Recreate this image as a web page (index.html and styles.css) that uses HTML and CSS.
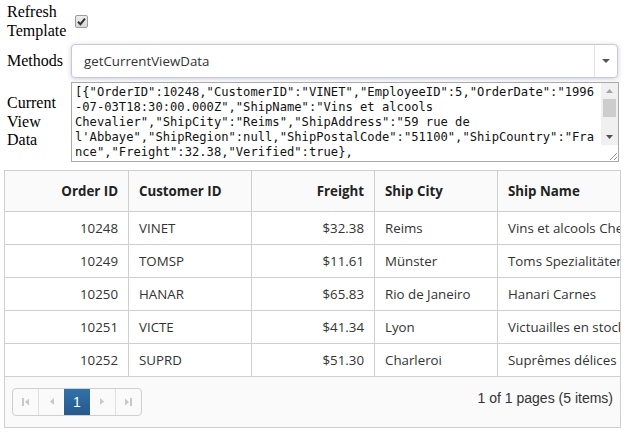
FILE: index.html
```html
<!DOCTYPE html>
<html>
<head>
<meta charset="utf-8">
<title>Grid</title>
<link rel="stylesheet" href="styles.css">
</head>
<body>
<div class="form">
  <label class="lbl" for="refresh">Refresh Template</label>
  <div class="ctl"><input id="refresh" type="checkbox" class="chk" checked></div>

  <label class="lbl">Methods</label>
  <div class="ctl">
    <div class="dropdown">
      <span class="dd-value">getCurrentViewData</span>
      <span class="dd-arrow"><svg width="8" height="4" viewBox="0 0 8 4"><path d="M0 0H8L4 4Z" fill="#555"/></svg></span>
    </div>
  </div>

  <label class="lbl">Current View Data</label>
  <div class="ctl">
    <div class="textbox">
      <div class="tb-text">[{"OrderID":10248,"CustomerID":"VINET","EmployeeID":5,"OrderDate":"1996
-07-03T18:30:00.000Z","ShipName":"Vins et alcools
Chevalier","ShipCity":"Reims","ShipAddress":"59 rue de
l'Abbaye","ShipRegion":null,"ShipPostalCode":"51100","ShipCountry":"Fra
nce","Freight":32.38,"Verified":true},</div>
      <div class="tb-scroll">
        <div class="sb-track">
          <span class="sb-btn"><svg width="7" height="4" viewBox="0 0 7 4"><path d="M0 4H7L3.5 0Z" fill="#a3a3a3"/></svg></span>
          <span class="sb-thumb"></span>
          <span class="sb-space"></span>
          <span class="sb-btn"><svg width="7" height="4" viewBox="0 0 7 4"><path d="M0 0H7L3.5 4Z" fill="#505050"/></svg></span>
        </div>
        <div class="sb-resizer"><svg width="8" height="8" viewBox="0 0 8 8"><path d="M1 8L8 1M5 8L8 5" stroke="#999" stroke-width="1"/></svg></div>
      </div>
    </div>
  </div>
</div>

<div class="grid">
  <div class="grid-body">
    <table class="tbl">
      <colgroup>
        <col class="c1"><col class="c2"><col class="c3"><col class="c4"><col class="c5">
      </colgroup>
      <thead>
        <tr>
          <th class="num">Order ID</th>
          <th>Customer ID</th>
          <th class="num">Freight</th>
          <th>Ship City</th>
          <th>Ship Name</th>
        </tr>
      </thead>
      <tbody>
        <tr><td class="num">10248</td><td>VINET</td><td class="num">$32.38</td><td>Reims</td><td>Vins et alcools Chevalier</td></tr>
        <tr><td class="num">10249</td><td>TOMSP</td><td class="num">$11.61</td><td>Münster</td><td>Toms Spezialitäten</td></tr>
        <tr><td class="num">10250</td><td>HANAR</td><td class="num">$65.83</td><td>Rio de Janeiro</td><td>Hanari Carnes</td></tr>
        <tr><td class="num">10251</td><td>VICTE</td><td class="num">$41.34</td><td>Lyon</td><td>Victuailles en stock</td></tr>
        <tr><td class="num">10252</td><td>SUPRD</td><td class="num">$51.30</td><td>Charleroi</td><td>Suprêmes délices</td></tr>
      </tbody>
    </table>
  </div>
  <div class="pager">
    <div class="pager-nav">
      <span class="pg-btn"><svg width="7" height="8" viewBox="0 0 7 8"><rect x="0" y="0" width="2" height="8" fill="#c8c8c8"/><path d="M7 0.5V7.5L3 4Z" fill="#c8c8c8"/></svg></span>
      <span class="pg-btn"><svg width="4" height="7" viewBox="0 0 4 7"><path d="M4 0V7L0 3.5Z" fill="#c8c8c8"/></svg></span>
      <span class="pg-btn pg-current">1</span>
      <span class="pg-btn"><svg width="4" height="7" viewBox="0 0 4 7"><path d="M0 0V7L4 3.5Z" fill="#c8c8c8"/></svg></span>
      <span class="pg-btn"><svg width="7" height="8" viewBox="0 0 7 8"><path d="M0 0.5V7.5L4 4Z" fill="#c8c8c8"/><rect x="5" y="0" width="2" height="8" fill="#c8c8c8"/></svg></span>
    </div>
    <span class="pager-info">1 of 1 pages (5 items)</span>
  </div>
</div>
</body>
</html>
```

FILE: styles.css
```css
* { box-sizing: border-box; }

body {
  margin: 0;
  background: #fff;
  color: #000;
  font-family: "Liberation Serif", "Times New Roman", serif;
}

.form {
  display: grid;
  grid-template-columns: 64px 1fr;
  row-gap: 4px;
  align-items: center;
  padding: 3px 7px 0 7px;
}

.lbl {
  font-size: 16px;
  line-height: 18.5px;
}

.ctl { min-width: 0; }

.chk {
  appearance: none;
  -webkit-appearance: none;
  display: block;
  width: 13px;
  height: 13px;
  margin: 0 0 0 4px;
  border: 1px solid #9c9c9c;
  border-radius: 2px;
  background-image: url("data:image/svg+xml,%3Csvg xmlns='http://www.w3.org/2000/svg' viewBox='0 0 11 11'%3E%3Cpath d='M2 5.8 L4.4 8.2 L9 2.6' fill='none' stroke='%23333' stroke-width='2'/%3E%3C/svg%3E"), linear-gradient(#ececec, #d9d9d9);
  background-size: 11px 11px, 100% 100%;
  background-repeat: no-repeat;
}

.dropdown {
  display: flex;
  height: 34px;
  border: 1px solid #c9c9d4;
  border-radius: 4px;
  background: #fff;
  box-shadow: 0 1px 5px rgba(70, 70, 130, 0.28);
  font-family: "Open Sans", "Noto Sans", sans-serif;
  font-size: 13.3px;
  color: #333;
}

.dd-value {
  flex: 1;
  display: flex;
  align-items: center;
  padding-left: 12px;
}

.dd-arrow {
  width: 23px;
  display: flex;
  align-items: center;
  justify-content: center;
  border-left: 1px solid #e2e2e2;
}

.textbox {
  display: flex;
  width: 548px;
  height: 80px;
  border: 1px solid #a9a9a9;
  background: #fff;
}

.tb-text {
  flex: 1;
  overflow: hidden;
  padding: 2px 0 0 3px;
  white-space: pre;
  font-family: "DejaVu Sans Mono", "Liberation Mono", monospace;
  font-size: 12.15px;
  line-height: 15px;
  color: #111;
}

.tb-scroll {
  width: 17px;
  display: flex;
  flex-direction: column;
}

.sb-track {
  flex: 1;
  display: flex;
  flex-direction: column;
  background: #f0f0f0;
}

.sb-btn {
  height: 16px;
  display: flex;
  align-items: center;
  justify-content: center;
}

.sb-thumb {
  height: 18px;
  margin: 0 2px;
  background: #cdcdcd;
}

.sb-space { flex: 1; }

.sb-resizer {
  height: 16px;
  display: flex;
  align-items: flex-end;
  justify-content: flex-end;
  padding: 0 1px 1px 0;
  background: #fff;
}

.grid {
  width: 617px;
  margin: 8px 0 0 4px;
  border: 1px solid #cfcfcf;
  font-family: "Open Sans", "Noto Sans", sans-serif;
  font-size: 13.3px;
  color: #333;
}

.grid-body { overflow: hidden; }

.tbl {
  table-layout: fixed;
  width: 692px;
  border-collapse: separate;
  border-spacing: 0;
}

.c1, .c2, .c3, .c4 { width: 123px; }
.c5 { width: 200px; }

.tbl th,
.tbl td {
  padding: 0 10px;
  border-bottom: 1px solid #cfcfcf;
  border-left: 1px solid #cfcfcf;
  text-align: left;
  white-space: nowrap;
  overflow: hidden;
  vertical-align: middle;
}

.tbl th:first-child,
.tbl td:first-child { border-left: none; }

.tbl th {
  height: 41px;
  font-weight: 700;
  background: #fafafa;
  color: #222;
}

.tbl td { height: 33px; }

.tbl .num { text-align: right; }

.pager {
  display: flex;
  align-items: center;
  justify-content: space-between;
  height: 50px;
  padding: 0 7px 0 7px;
  background: #fafafa;
  font-family: "Liberation Sans", Arial, sans-serif;
  font-size: 14px;
  color: #333;
}

.pager-nav {
  display: flex;
  width: 130px;
  height: 28px;
  margin-bottom: 1px;
  border: 1px solid #cfcfcf;
  border-radius: 4px;
  overflow: hidden;
  background: #fafafa;
}

.pg-btn {
  flex: 1;
  display: flex;
  align-items: center;
  justify-content: center;
  border-left: 1px solid #e0e0e0;
}

.pg-btn:first-child { border-left: none; }

.pg-current {
  border-left: none;
  background: linear-gradient(#3172aa, #27598a);
  color: #fff;
}

.pg-current + .pg-btn { border-left: none; }

.pager-info { margin-bottom: 8px; }
```
